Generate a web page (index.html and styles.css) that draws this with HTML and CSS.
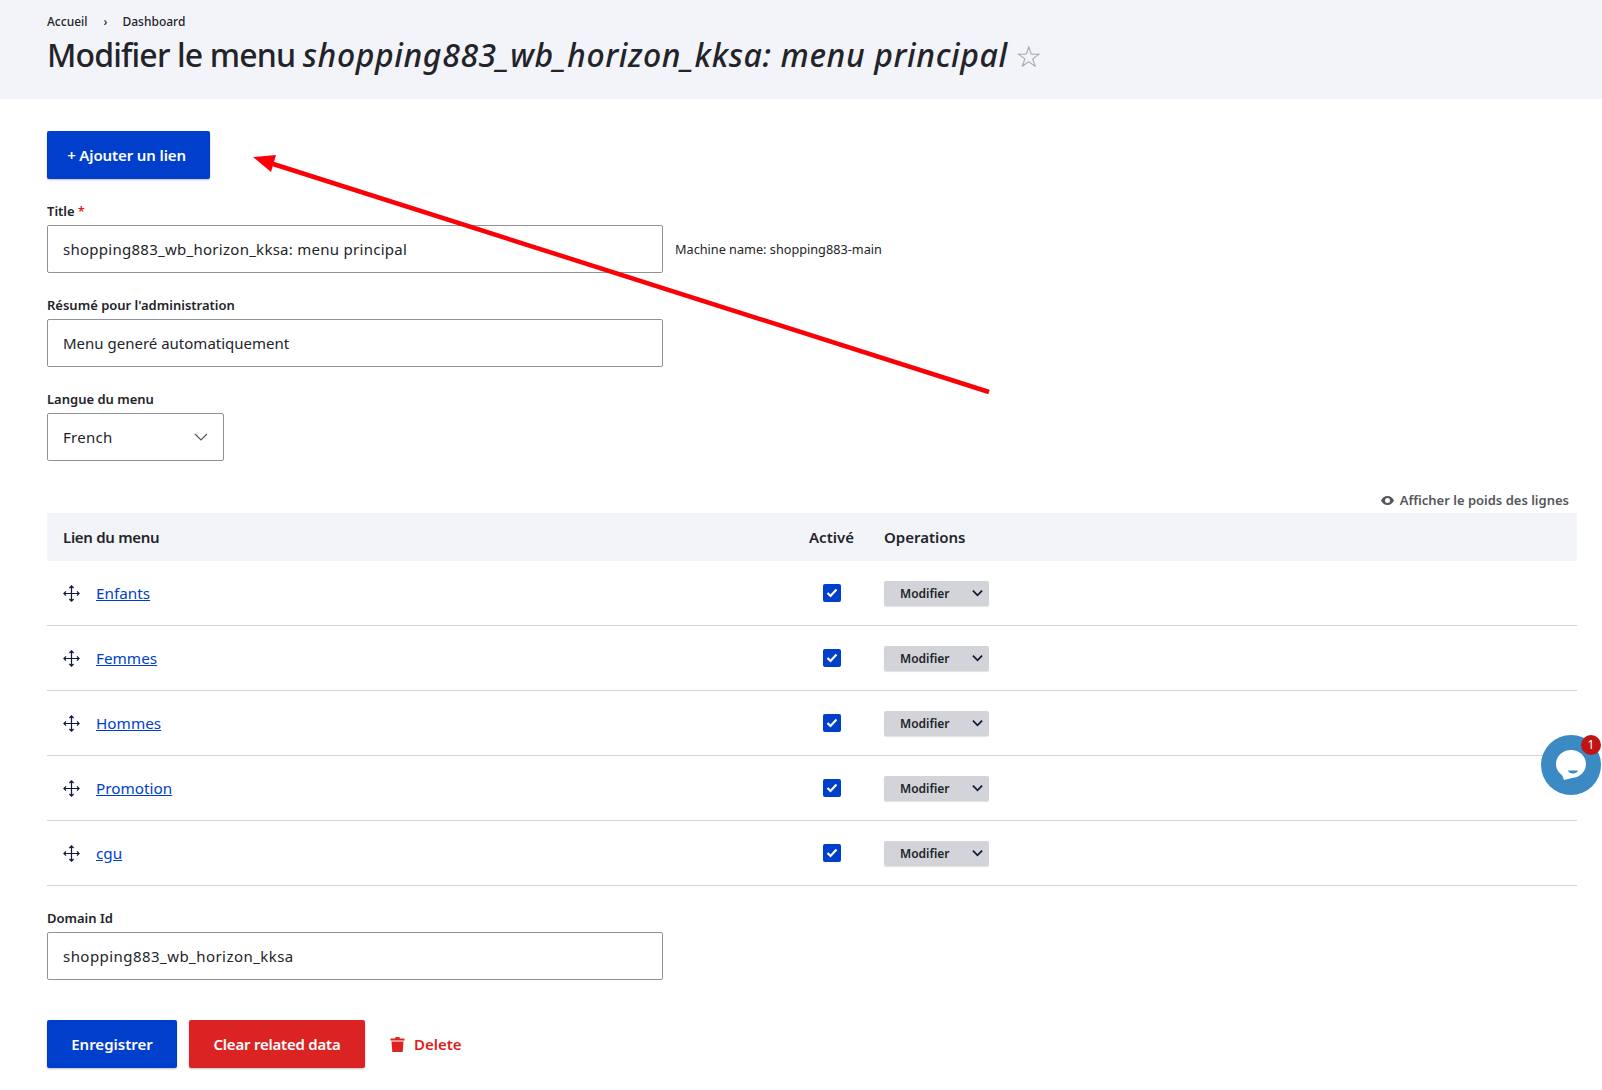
FILE: index.html
```html
<!DOCTYPE html>
<html lang="fr">
<head>
  <meta charset="UTF-8" />
  <title>Modifier le menu</title>
  <link rel="stylesheet" href="styles.css">
</head>
<body>

<header class="page-header">
  <nav class="breadcrumb">
    <a href="#">Accueil</a>
    <span class="breadcrumb-sep">›</span>
    <a href="#">Dashboard</a>
  </nav>
  <h1>Modifier le menu <em>shopping883_wb_horizon_kksa: menu principal</em> <span class="star">☆</span></h1>
</header>

<main class="content">
  <a class="btn btn-primary btn-add" href="#">+ Ajouter un lien</a>

  <div class="field">
    <label>Title<span class="required">*</span></label>
    <div class="field-row">
      <input class="text-input input-code" type="text" value="shopping883_wb_horizon_kksa: menu principal">
      <span class="machine-name">Machine name: shopping883-main</span>
    </div>
  </div>

  <div class="field">
    <label>Résumé pour l'administration</label>
    <input class="text-input" type="text" value="Menu generé automatiquement">
  </div>

  <div class="field">
    <label>Langue du menu</label>
    <div class="select-box">
      <span>French</span>
      <svg width="14" height="8" viewBox="0 0 14 8"><path d="M1 1l6 6 6-6" fill="none" stroke="#55565b" stroke-width="1.2"/></svg>
    </div>
  </div>

  <div class="weights-toggle">
    <svg width="13" height="9" viewBox="0 0 13 9"><path d="M6.5 0C3.6 0 1.2 1.8 0 4.5 1.2 7.200 3.600 9 6.500 9s5.300-1.800 6.500-4.500C11.800 1.800 9.400 0 6.500 0zm0 7a2.500 2.500 0 1 1 0-5 2.500 2.500 0 0 1 0 5z" fill="#55565b"/></svg>
    Afficher le poids des lignes
  </div>

  <table class="menu-table">
    <thead>
      <tr>
        <th class="col-link">Lien du menu</th>
        <th class="col-active">Activé</th>
        <th class="col-ops">Operations</th>
      </tr>
    </thead>
    <tbody>
      <tr>
        <td class="col-link"><div class="link-cell"><svg class="drag" width="17" height="17" viewBox="0 0 18 18"><path d="M9 1v16M1 9h16M6.800 3.200L9 1l2.200 2.200M6.800 14.800L9 17l2.200-2.200M3.200 6.800L1 9l2.200 2.200M14.800 6.800L17 9l-2.200 2.200" fill="none" stroke="#0f1a3a" stroke-width="1.300"/></svg><a href="#">Enfants</a></div></td>
        <td class="col-active"><span class="check"><svg width="12" height="10" viewBox="0 0 12 10"><path d="M1.500 5l3 3 6-6.500" fill="none" stroke="#fff" stroke-width="2.200"/></svg></span></td>
        <td class="col-ops"><span class="ops-btn">Modifier<svg width="11" height="8" viewBox="0 0 12 8"><path d="M1 1.500l5 5 5-5" fill="none" stroke="#0f1a3a" stroke-width="2"/></svg></span></td>
      </tr>
      <tr>
        <td class="col-link"><div class="link-cell"><svg class="drag" width="17" height="17" viewBox="0 0 18 18"><path d="M9 1v16M1 9h16M6.800 3.200L9 1l2.200 2.200M6.800 14.800L9 17l2.200-2.200M3.200 6.800L1 9l2.200 2.200M14.800 6.800L17 9l-2.200 2.200" fill="none" stroke="#0f1a3a" stroke-width="1.300"/></svg><a href="#">Femmes</a></div></td>
        <td class="col-active"><span class="check"><svg width="12" height="10" viewBox="0 0 12 10"><path d="M1.500 5l3 3 6-6.500" fill="none" stroke="#fff" stroke-width="2.200"/></svg></span></td>
        <td class="col-ops"><span class="ops-btn">Modifier<svg width="11" height="8" viewBox="0 0 12 8"><path d="M1 1.500l5 5 5-5" fill="none" stroke="#0f1a3a" stroke-width="2"/></svg></span></td>
      </tr>
      <tr>
        <td class="col-link"><div class="link-cell"><svg class="drag" width="17" height="17" viewBox="0 0 18 18"><path d="M9 1v16M1 9h16M6.800 3.200L9 1l2.200 2.200M6.800 14.800L9 17l2.200-2.200M3.200 6.800L1 9l2.200 2.200M14.800 6.800L17 9l-2.200 2.200" fill="none" stroke="#0f1a3a" stroke-width="1.300"/></svg><a href="#">Hommes</a></div></td>
        <td class="col-active"><span class="check"><svg width="12" height="10" viewBox="0 0 12 10"><path d="M1.500 5l3 3 6-6.500" fill="none" stroke="#fff" stroke-width="2.200"/></svg></span></td>
        <td class="col-ops"><span class="ops-btn">Modifier<svg width="11" height="8" viewBox="0 0 12 8"><path d="M1 1.500l5 5 5-5" fill="none" stroke="#0f1a3a" stroke-width="2"/></svg></span></td>
      </tr>
      <tr>
        <td class="col-link"><div class="link-cell"><svg class="drag" width="17" height="17" viewBox="0 0 18 18"><path d="M9 1v16M1 9h16M6.800 3.200L9 1l2.200 2.200M6.800 14.800L9 17l2.200-2.200M3.200 6.800L1 9l2.200 2.200M14.800 6.800L17 9l-2.200 2.200" fill="none" stroke="#0f1a3a" stroke-width="1.300"/></svg><a href="#">Promotion</a></div></td>
        <td class="col-active"><span class="check"><svg width="12" height="10" viewBox="0 0 12 10"><path d="M1.500 5l3 3 6-6.500" fill="none" stroke="#fff" stroke-width="2.200"/></svg></span></td>
        <td class="col-ops"><span class="ops-btn">Modifier<svg width="11" height="8" viewBox="0 0 12 8"><path d="M1 1.500l5 5 5-5" fill="none" stroke="#0f1a3a" stroke-width="2"/></svg></span></td>
      </tr>
      <tr>
        <td class="col-link"><div class="link-cell"><svg class="drag" width="17" height="17" viewBox="0 0 18 18"><path d="M9 1v16M1 9h16M6.800 3.200L9 1l2.200 2.200M6.800 14.800L9 17l2.200-2.200M3.200 6.800L1 9l2.200 2.200M14.800 6.800L17 9l-2.200 2.200" fill="none" stroke="#0f1a3a" stroke-width="1.300"/></svg><a href="#">cgu</a></div></td>
        <td class="col-active"><span class="check"><svg width="12" height="10" viewBox="0 0 12 10"><path d="M1.500 5l3 3 6-6.500" fill="none" stroke="#fff" stroke-width="2.200"/></svg></span></td>
        <td class="col-ops"><span class="ops-btn">Modifier<svg width="11" height="8" viewBox="0 0 12 8"><path d="M1 1.500l5 5 5-5" fill="none" stroke="#0f1a3a" stroke-width="2"/></svg></span></td>
      </tr>
    </tbody>
  </table>

  <div class="field field-domain">
    <label>Domain Id</label>
    <input class="text-input input-code-wide" type="text" value="shopping883_wb_horizon_kksa">
  </div>

  <div class="actions">
    <a class="btn btn-primary btn-save" href="#">Enregistrer</a>
    <a class="btn btn-danger" href="#">Clear related data</a>
    <a class="delete-link" href="#">
      <svg width="15" height="16" viewBox="0 0 14 16"><path d="M0 2.500h4.500L5.200 1h3.600l.7 1.500H14V4.500H0zM1 5.500h12l-.8 10.500H1.800z" fill="#dc2323"/></svg>
      Delete
    </a>
  </div>
</main>

<!-- annotation drawn on top of the screenshot -->
<svg class="arrow" width="1602" height="1090" viewBox="0 0 1602 1090">
  <line x1="989" y1="392" x2="270" y2="163" stroke="#fb0007" stroke-width="4.500"/>
  <polygon points="253,157 276,155 271,172" fill="#fb0007"/>
</svg>

<div class="chat-widget">
  <svg width="30" height="30" viewBox="0 0 30 30"><path d="M15 0C6.700 0 0 6.300 0 14c0 4.500 2.300 8.500 6 11l2 5 8-2c7.900-.4 14-6.500 14-14C30 6.300 23.300 0 15 0z" fill="#fff"/><path d="M12 20.500h10c-1 4-9 4-10 0z" fill="#3b8ac4"/></svg>
  <span class="chat-badge">1</span>
</div>

</body>
</html>
```
FILE: styles.css
```css
* {
  box-sizing: border-box;
}

html, body {
  overflow: hidden;
}

body {
  margin: 0;
  background: #fff;
  color: #232429;
  font-family: "Noto Sans", sans-serif;
  font-size: 16px;
  height: 1090px;
  position: relative;
}

a {
  color: inherit;
  text-decoration: none;
}

.page-header {
  background: #f3f4f9;
  height: 99px;
  padding: 13px 47px 0;
}

.breadcrumb {
  font-size: 12px;
  line-height: 17px;
  display: flex;
  gap: 11px;
  font-weight: 500;
}

.breadcrumb-sep {
  margin: 0 4px 0 5px;
}

h1 {
  margin: 5px 0 0;
  font-size: 32px;
  line-height: 40px;
  font-weight: 500;
  letter-spacing: -0.85px;
  white-space: nowrap;
}

h1 em {
  font-style: italic;
  letter-spacing: 0.6px;
}

.star {
  color: #9a9ba3;
  font-weight: 400;
  font-family: "DejaVu Sans", sans-serif;
  font-size: 30px;
  letter-spacing: 0;
}

.content {
  padding: 32px 25px 0 47px;
}

.btn {
  display: inline-flex;
  align-items: center;
  justify-content: center;
  height: 48px;
  border-radius: 2px;
  color: #fff;
  font-size: 15px;
  font-weight: 600;
  box-shadow: 0 1px 2px rgba(0,0,0,0.25);
}

.btn-primary {
  background: #003ecc;
}

.btn-danger {
  background: #dc2323;
  width: 176px;
  letter-spacing: -0.22px;
}

.btn-add {
  width: 163px;
  padding-right: 4px;
  letter-spacing: -0.12px;
}

.btn-save {
  width: 130px;
}

.field {
  margin-top: 24px;
}

.field label {
  display: block;
  font-size: 13px;
  line-height: 17px;
  font-weight: 600;
  margin-bottom: 5px;
}

.required {
  color: #dc2323;
  margin-left: 3px;
}

.field-row {
  display: flex;
  align-items: center;
  gap: 12px;
}

.text-input {
  display: block;
  width: 616px;
  height: 48px;
  padding: 0 15px;
  border: 1px solid #8e929c;
  border-radius: 2px;
  font-family: inherit;
  font-size: 15px;
  color: #232429;
  background: #fff;
}

.input-code {
  letter-spacing: 0.27px;
}

.input-code-wide {
  letter-spacing: 0.45px;
}

.machine-name {
  font-size: 12.7px;
}

.select-box {
  width: 177px;
  height: 48px;
  padding: 0 15px;
  border: 1px solid #8e929c;
  border-radius: 2px;
  font-size: 15px;
  letter-spacing: 0.3px;
  display: flex;
  align-items: center;
  justify-content: space-between;
}

.weights-toggle {
  display: flex;
  align-items: center;
  justify-content: flex-end;
  gap: 6px;
  height: 18px;
  margin-top: 30px;
  padding-right: 8px;
  font-size: 13px;
  font-weight: 600;
  color: #55565b;
}

.menu-table {
  width: 1530px;
  margin-top: 4px;
  border-collapse: separate;
  border-spacing: 0;
  table-layout: fixed;
}

.menu-table th {
  background: #f3f4f9;
  height: 48px;
  text-align: left;
  font-size: 15px;
  font-weight: 600;
  padding: 0 16px;
}

.menu-table th.col-link {
  letter-spacing: -0.3px;
}

.menu-table td {
  height: 65px;
  padding: 0 16px;
  border-bottom: 1px solid #d3d4d9;
  font-size: 15.3px;
}

.col-link {
  width: 748px;
}

.menu-table .col-active {
  width: 73px;
  padding: 0;
  text-align: center;
}

.link-cell {
  display: flex;
  align-items: center;
  gap: 16px;
}

.link-cell a {
  color: #003ecc;
  text-decoration: underline;
}

.check {
  display: inline-flex;
  align-items: center;
  justify-content: center;
  width: 18px;
  height: 18px;
  margin-bottom: 2px;
  background: #003ecc;
  border-radius: 2px;
  vertical-align: middle;
}

.ops-btn {
  display: inline-flex;
  align-items: center;
  justify-content: space-between;
  width: 105px;
  height: 25px;
  padding: 0 6px 0 16px;
  background: #d3d4d9;
  border-radius: 2px;
  font-size: 12px;
  font-weight: 600;
  vertical-align: middle;
  box-shadow: 0 1px 1px rgba(0,0,0,0.12);
}

.actions {
  display: flex;
  align-items: center;
  gap: 12px;
  margin-top: 40px;
}

.delete-link {
  display: inline-flex;
  align-items: center;
  gap: 9px;
  margin-left: 13px;
  color: #dc2323;
  font-size: 15px;
  font-weight: 600;
}

.arrow {
  position: absolute;
  top: 0;
  left: 0;
  pointer-events: none;
}

.chat-widget {
  position: absolute;
  left: 1541px;
  top: 735px;
  width: 60px;
  height: 60px;
  border-radius: 50%;
  background: #3b8ac4;
  display: flex;
  align-items: center;
  justify-content: center;
}

.chat-badge {
  position: absolute;
  top: 0;
  right: 0;
  width: 20px;
  height: 20px;
  border-radius: 50%;
  background: #c01515;
  color: #fff;
  font-size: 12px;
  line-height: 20px;
  text-align: center;
}
```
